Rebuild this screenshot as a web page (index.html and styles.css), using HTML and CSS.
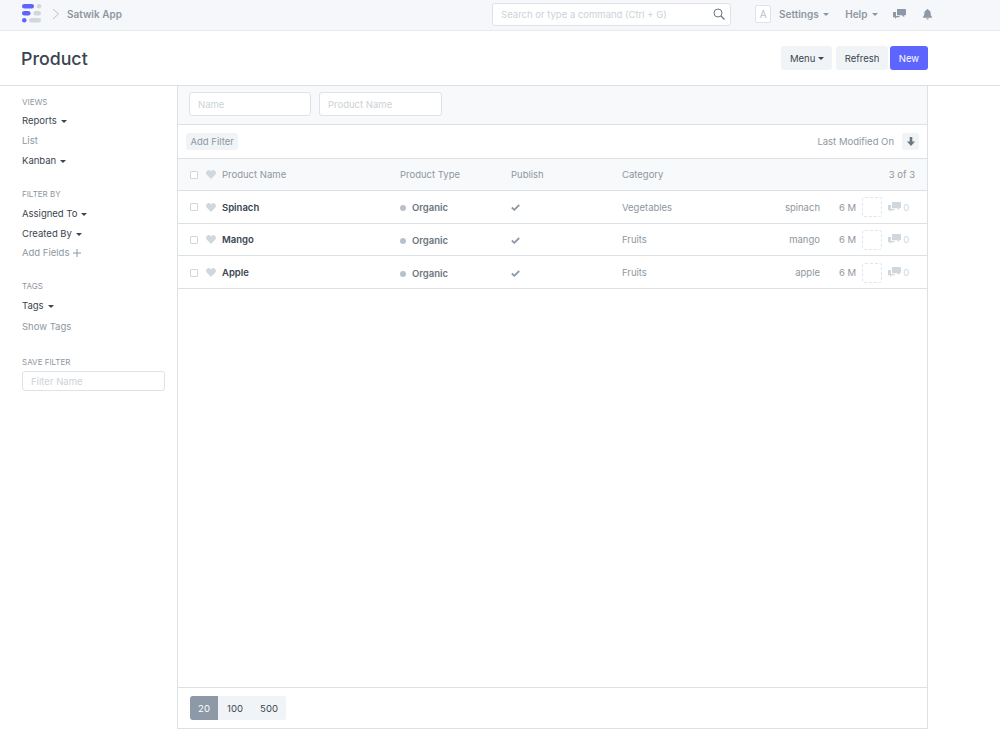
FILE: index.html
```html
<!DOCTYPE html>
<html lang="en">
<head>
  <meta charset="UTF-8">
  <title>Product</title>
  <link rel="stylesheet" href="styles.css">
</head>
<body>
  <!-- Top navbar -->
  <div class="navbar">
    <svg class="logo" width="21" height="21" viewBox="0 0 21 21">
      <rect x="0" y="1" width="12" height="4.500" rx="2.250" fill="#5e64ff"/>
      <circle cx="17" cy="3.250" r="2.250" fill="#d1d8dd"/>
      <rect x="0" y="8" width="8.500" height="4.500" rx="2.250" fill="#5e64ff"/>
      <rect x="11.500" y="8" width="7.500" height="4.500" rx="2.250" fill="#d1d8dd"/>
      <circle cx="2.250" cy="17.250" r="2.250" fill="#5e64ff"/>
      <rect x="7" y="15" width="12" height="4.500" rx="2.250" fill="#d1d8dd"/>
    </svg>
    <svg class="crumb-arrow" width="8" height="12" viewBox="0 0 8 12"><path d="M1 1l5.500 5L1 11" fill="none" stroke="#b8c2cc" stroke-width="1"/></svg>
    <span class="app-name">Satwik App</span>

    <div class="nav-right">
      <div class="search-box">
        <span class="search-text">Search or type a command (Ctrl + G)</span>
        <svg width="12" height="12" viewBox="0 0 12 12"><circle cx="5" cy="5" r="4" fill="none" stroke="#6c7680" stroke-width="1"/><path d="M8 8l3.500 3.500" stroke="#6c7680" stroke-width="1.200"/></svg>
      </div>
      <span class="avatar">A</span>
      <span class="nav-link settings">Settings <i class="caret"></i></span>
      <span class="nav-link help">Help <i class="caret"></i></span>
      <svg class="nav-chat" width="13" height="11" viewBox="0 0 13 11"><path d="M4 0h8.200a.8.8 0 0 1 .8.8v4.700a.8.8 0 0 1-.8.8h-1v2L9 6.300H4z" fill="#8d99a6"/><path d="M0 3h3v4h3.500v1.200H3.500L2 10V8.200H0z" fill="#8d99a6"/></svg>
      <svg class="nav-bell" width="9" height="11" viewBox="0 0 10 12"><path d="M5 0a1 1 0 0 1 1 1c1.700.4 2.500 1.800 2.500 3.500 0 2 .5 3 1.500 4v1H0v-1c1-1 1.500-2 1.500-4C1.500 2.800 2.300 1.400 4 1a1 1 0 0 1 1-1zM3.700 10.300h2.600a1.300 1.300 0 0 1-2.600 0z" fill="#8d99a6"/></svg>
    </div>
  </div>

  <!-- Page title -->
  <div class="page-head">
    <h1>Product</h1>
    <div class="actions">
      <span class="btn menu-btn">Menu <i class="caret dark"></i></span>
      <span class="btn refresh-btn">Refresh</span>
      <span class="btn primary">New</span>
    </div>
  </div>

  <div class="layout">
    <div class="sidebar">
      <div class="side-group views">
        <div class="side-label">VIEWS</div>
        <div class="side-item">Reports <i class="caret dark"></i></div>
        <div class="side-item muted">List</div>
        <div class="side-item">Kanban <i class="caret dark"></i></div>
      </div>
      <div class="side-group filters">
        <div class="side-label">FILTER BY</div>
        <div class="side-item">Assigned To <i class="caret dark"></i></div>
        <div class="side-item">Created By <i class="caret dark"></i></div>
        <div class="side-item muted add-fields">Add Fields
          <svg width="8" height="8" viewBox="0 0 8 8"><path d="M4 0v8M0 4h8" stroke="#8d99a6" stroke-width="1"/></svg>
        </div>
      </div>
      <div class="side-group tags">
        <div class="side-label">TAGS</div>
        <div class="side-item">Tags <i class="caret dark"></i></div>
        <div class="side-item muted show-tags">Show Tags</div>
      </div>
      <div class="side-group save">
        <div class="side-label">SAVE FILTER</div>
        <div class="input side-input">Filter Name</div>
      </div>
    </div>

    <div class="panel">
      <div class="filter-inputs">
        <div class="input name-input">Name</div>
        <div class="input name-input">Product Name</div>
      </div>

      <div class="filter-bar">
        <span class="add-filter">Add Filter</span>
        <span class="sort-label">Last Modified On</span>
        <span class="sort-btn">
          <svg width="8" height="9" viewBox="0 0 8 9"><path d="M2.700 0h2.600v4.500H8L4 9 0 4.500h2.700z" fill="#6c7680"/></svg>
        </span>
      </div>

      <div class="row head-row">
        <span class="check"></span>
        <svg class="heart" width="10" height="9" viewBox="0 0 11 10"><path d="M5.500 10L.9 5.300A2.900 2.900 0 0 1 5.100 1.200l.4.400.4-.4a2.900 2.900 0 0 1 4.200 4.100z" fill="#d1d8dd"/></svg>
        <span class="col-name">Product Name</span>
        <span class="col-type">Product Type</span>
        <span class="col-pub">Publish</span>
        <span class="col-cat">Category</span>
        <span class="count">3 of 3</span>
      </div>

      <div class="row">
        <span class="check"></span>
        <svg class="heart" width="10" height="9" viewBox="0 0 11 10"><path d="M5.500 10L.9 5.300A2.900 2.900 0 0 1 5.100 1.200l.4.400.4-.4a2.900 2.900 0 0 1 4.200 4.100z" fill="#d1d8dd"/></svg>
        <span class="col-name strong">Spinach</span>
        <span class="col-type organic"><i class="dot"></i>Organic</span>
        <span class="col-pub tick"><svg width="9" height="7" viewBox="0 0 9 7"><path d="M.8 3.500l2.500 2.300L8.200 1" fill="none" stroke="#8d99a6" stroke-width="1.800"/></svg></span>
        <span class="col-cat">Vegetables</span>
        <span class="col-id">spinach</span>
        <span class="col-age">6 M</span>
        <span class="assign"></span>
        <svg class="chat" width="13" height="11" viewBox="0 0 13 11"><path d="M4 0h8.200a.8.8 0 0 1 .8.8v4.700a.8.8 0 0 1-.8.8h-1v2L9 6.300H4z" fill="#d1d8dd"/><path d="M0 3h3v4h3.500v1.200H3.500L2 10V8.200H0z" fill="#d1d8dd"/></svg>
        <span class="zero">0</span>
      </div>

      <div class="row">
        <span class="check"></span>
        <svg class="heart" width="10" height="9" viewBox="0 0 11 10"><path d="M5.500 10L.9 5.300A2.900 2.900 0 0 1 5.100 1.200l.4.400.4-.4a2.900 2.900 0 0 1 4.200 4.100z" fill="#d1d8dd"/></svg>
        <span class="col-name strong">Mango</span>
        <span class="col-type organic"><i class="dot"></i>Organic</span>
        <span class="col-pub tick"><svg width="9" height="7" viewBox="0 0 9 7"><path d="M.8 3.500l2.500 2.300L8.200 1" fill="none" stroke="#8d99a6" stroke-width="1.800"/></svg></span>
        <span class="col-cat">Fruits</span>
        <span class="col-id">mango</span>
        <span class="col-age">6 M</span>
        <span class="assign"></span>
        <svg class="chat" width="13" height="11" viewBox="0 0 13 11"><path d="M4 0h8.200a.8.8 0 0 1 .8.8v4.700a.8.8 0 0 1-.8.8h-1v2L9 6.300H4z" fill="#d1d8dd"/><path d="M0 3h3v4h3.500v1.200H3.500L2 10V8.200H0z" fill="#d1d8dd"/></svg>
        <span class="zero">0</span>
      </div>

      <div class="row">
        <span class="check"></span>
        <svg class="heart" width="10" height="9" viewBox="0 0 11 10"><path d="M5.500 10L.9 5.300A2.900 2.900 0 0 1 5.100 1.200l.4.400.4-.4a2.900 2.900 0 0 1 4.200 4.100z" fill="#d1d8dd"/></svg>
        <span class="col-name strong">Apple</span>
        <span class="col-type organic"><i class="dot"></i>Organic</span>
        <span class="col-pub tick"><svg width="9" height="7" viewBox="0 0 9 7"><path d="M.8 3.500l2.500 2.300L8.200 1" fill="none" stroke="#8d99a6" stroke-width="1.800"/></svg></span>
        <span class="col-cat">Fruits</span>
        <span class="col-id">apple</span>
        <span class="col-age">6 M</span>
        <span class="assign"></span>
        <svg class="chat" width="13" height="11" viewBox="0 0 13 11"><path d="M4 0h8.200a.8.8 0 0 1 .8.8v4.700a.8.8 0 0 1-.8.8h-1v2L9 6.300H4z" fill="#d1d8dd"/><path d="M0 3h3v4h3.500v1.200H3.500L2 10V8.200H0z" fill="#d1d8dd"/></svg>
        <span class="zero">0</span>
      </div>

      <div class="empty-space"></div>

      <div class="pager">
        <div class="pager-group">
          <span class="page-size active">20</span>
          <span class="page-size">100</span>
          <span class="page-size">500</span>
        </div>
      </div>
    </div>
  </div>
</body>
</html>
```

FILE: styles.css
```css
* {
  box-sizing: border-box;
}

html,
body {
  height: 750px;
  overflow: hidden;
}

body {
  margin: 0;
  background: #fff;
  font-family: 'Inter', sans-serif;
  font-size: 9.5px;
  color: #3a4550;
}

.navbar {
  display: flex;
  align-items: center;
  height: 31px;
  padding: 0 0 2px 22px;
  background: #f5f7fa;
  border-bottom: 1px solid #e6eaed;
}

.logo {
  margin-top: -2px;
}

.crumb-arrow {
  margin-left: 9px;
}

.app-name {
  margin-left: 7px;
  font-size: 10px;
  font-weight: 600;
  color: #8e979f;
}

.nav-right {
  display: flex;
  align-items: center;
  margin-left: auto;
}

.search-box {
  display: flex;
  align-items: center;
  justify-content: space-between;
  width: 239px;
  height: 23px;
  padding: 0 5px 0 8px;
  background: #fff;
  border: 1px solid #dfe3e6;
  border-radius: 3px;
}

.search-text {
  color: #cdd2d6;
}

.avatar {
  display: flex;
  align-items: center;
  justify-content: center;
  width: 16px;
  height: 18px;
  margin-left: 24px;
  background: #fff;
  border: 1px solid #dfe3e6;
  border-radius: 2px;
  font-size: 10px;
  color: #b8c2cc;
}

.nav-link {
  font-size: 10px;
  font-weight: 600;
  color: #8e979f;
  white-space: nowrap;
}

.settings {
  margin-left: 8px;
}

.help {
  margin-left: 16px;
}

.nav-chat {
  margin-left: 15px;
}

.nav-bell {
  margin-left: 17px;
  margin-right: 68px;
}

.caret {
  display: inline-block;
  margin-left: 2px;
  vertical-align: 2px;
  border-top: 3px solid #8e979f;
  border-left: 3px solid transparent;
  border-right: 3px solid transparent;
}

.caret.dark {
  border-top-color: #3a4550;
}

.page-head {
  display: flex;
  align-items: center;
  justify-content: space-between;
  height: 55px;
  padding: 0 72px 0 21px;
  border-bottom: 1px solid #dce1e5;
}

.page-head h1 {
  margin: 0;
  font-size: 17.8px;
  font-weight: 500;
  color: #3a4550;
}

.actions {
  display: flex;
  gap: 2px;
}

.btn {
  display: flex;
  align-items: center;
  height: 24px;
  padding: 0 8px;
  background: #f0f4f7;
  border-radius: 3px;
  color: #3a4550;
  white-space: nowrap;
}

.menu-btn {
  width: 51px;
  margin-right: 2px;
  padding: 0 9px;
  gap: 3px;
}

.menu-btn .caret {
  margin-left: 0;
  vertical-align: baseline;
}

.refresh-btn {
  width: 52px;
  justify-content: center;
  padding: 0;
}

.btn.primary {
  width: 38px;
  justify-content: center;
  padding: 0;
  background: #5e64ff;
  color: #fff;
}

.layout {
  display: flex;
  height: 643px;
}

.sidebar {
  width: 177px;
  padding: 11px 12px 0 22px;
}

.side-group {
  margin-bottom: 23px;
}

.side-group.tags {
  margin-bottom: 25px;
}

.side-label {
  height: 10px;
  line-height: 10px;
  font-size: 8px;
  color: #8e979f;
}

.side-item {
  display: flex;
  align-items: center;
  gap: 4px;
  margin-top: 10px;
  height: 10px;
  line-height: 10px;
  color: #3a4550;
  white-space: nowrap;
}

.side-item .caret {
  margin-left: 0;
}

.views .side-label + .side-item {
  margin-top: 9px;
}

.side-item.muted {
  color: #8e979f;
}

.side-item.add-fields {
  margin-top: 9px;
}

.side-item.show-tags {
  margin-top: 11px;
}

.input {
  display: flex;
  align-items: center;
  height: 24px;
  padding-left: 8px;
  background: #fff;
  border: 1px solid #dfe3e6;
  border-radius: 3px;
  color: #cdd2d6;
}

.side-input {
  height: 20px;
  margin-top: 4px;
}

.panel {
  display: flex;
  flex-direction: column;
  width: 751px;
  background: #fff;
  border: 1px solid #dce1e5;
  border-top: 0;
}

.filter-inputs {
  display: flex;
  gap: 8px;
  height: 39px;
  padding: 6px 12px 0 11px;
  background: #f7f9fb;
  border-bottom: 1px solid #dce1e5;
}

.name-input {
  width: 122px;
  height: 24px;
}

.name-input + .name-input {
  width: 123px;
}

.filter-bar {
  display: flex;
  align-items: center;
  height: 34px;
  padding: 0 8px;
  border-bottom: 1px solid #dce1e5;
}

.add-filter {
  padding: 0 4.5px;
  height: 17px;
  line-height: 17px;
  background: #f0f4f7;
  border-radius: 3px;
  color: #8e979f;
}

.sort-label {
  margin-left: auto;
  color: #8e979f;
}

.sort-btn {
  display: flex;
  align-items: center;
  justify-content: center;
  width: 17px;
  height: 17px;
  margin-left: 8px;
  background: #f0f4f7;
  border-radius: 3px;
}

.row {
  display: flex;
  align-items: center;
  height: 32.67px;
  padding: 1px 0 0 12px;
  border-bottom: 1px solid #dce1e5;
  color: #8e979f;
  white-space: nowrap;
}

.head-row {
  height: 32px;
  padding: 0 12px;
  background: #f7f9fb;
}

.check {
  width: 8px;
  height: 8px;
  border: 1px solid #d1d8dd;
  border-radius: 1px;
  background: #fff;
}

.heart {
  margin-left: 8px;
}

.col-name {
  width: 178px;
  margin-left: 6px;
}

.strong {
  font-weight: 600;
  color: #3a4550;
}

.col-type {
  width: 111px;
}

.organic {
  padding-top: 1px;
  font-weight: 600;
  color: #6c7680;
}

.dot {
  display: inline-block;
  width: 6px;
  height: 6px;
  margin-right: 6px;
  border-radius: 50%;
  background: #b8c2cc;
}

.col-pub {
  width: 111px;
}

.tick {
  padding-top: 1px;
}

.col-cat {
  width: 100px;
}

.count {
  margin-left: auto;
}

.col-id {
  width: 98px;
  text-align: right;
}

.col-age {
  margin-left: 19px;
}

.assign {
  width: 20px;
  height: 20px;
  margin-left: 6px;
  border: 1px dashed #e3e6e9;
  border-radius: 3px;
}

.chat {
  margin-left: 6px;
}

.zero {
  margin-left: 2px;
  color: #d1d8dd;
}

.empty-space {
  flex: 1;
}

.pager {
  height: 41px;
  padding: 8px 12px 0;
  border-top: 1px solid #dce1e5;
}

.pager-group {
  display: inline-flex;
  height: 24px;
  background: #f0f4f7;
  border-radius: 3px;
  overflow: hidden;
}

.page-size {
  display: flex;
  align-items: center;
  justify-content: center;
  width: 34px;
  color: #3a4550;
}

.page-size.active {
  width: 28px;
  background: #8d99a6;
  color: #fff;
}
```
